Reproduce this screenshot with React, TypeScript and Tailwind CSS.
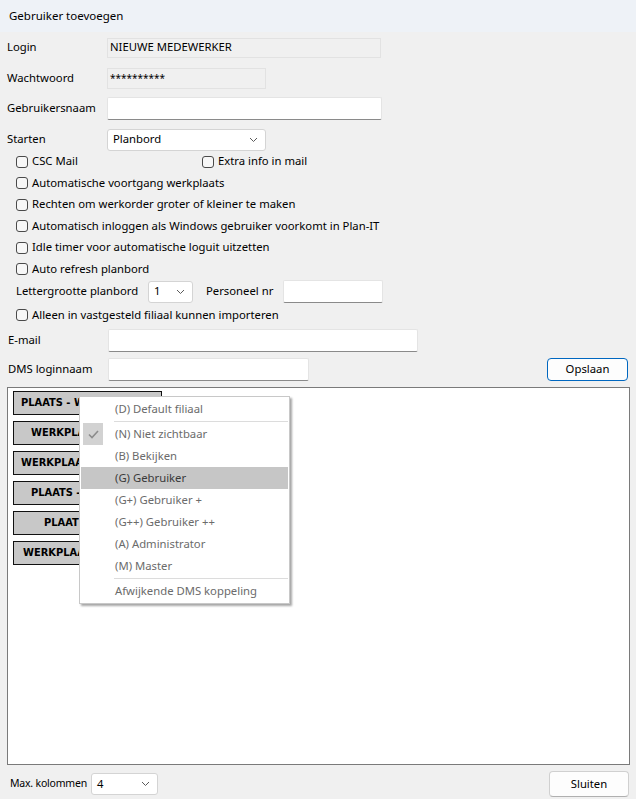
import React from "react";

const font = { fontFamily: '"Noto Sans", "Open Sans", sans-serif' };

function Check({ label }: { label: string }) {
  return (
    <label className="flex items-center gap-[4px] whitespace-nowrap">
      <span className="w-[12px] h-[12px] rounded-[3px] border border-[#4a4a4a] bg-[#f7f7f7] shrink-0" />
      <span>{label}</span>
    </label>
  );
}

function Chevron() {
  return (
    <svg width="9" height="6" viewBox="0 0 9 6" className="text-[#5a5a5a]">
      <path d="M1 1 L4.5 4.5 L8 1" fill="none" stroke="currentColor" strokeWidth="1" />
    </svg>
  );
}

function Select({ value, width }: { value: string; width: string }) {
  return (
    <div
      className={`${width} h-[22px] bg-white border border-[#d4d4d4] rounded-[3px] flex items-center justify-between pl-[5px] pr-[7px] shrink-0`}
    >
      <span>{value}</span>
      <Chevron />
    </div>
  );
}

function Field({ width, h = "h-[23px]" }: { width: string; h?: string }) {
  return (
    <div
      className={`${width} ${h} bg-white border border-[#e4e4e4] border-b-[#8a8a8a] rounded-[2px] shrink-0`}
    />
  );
}

const cards = [
  { t: "PLAATS - WERKPLAATS A", pl: "pl-[7px]" },
  { t: "WERKPLAATS NOORD", pl: "pl-[17px]" },
  { t: "WERKPLAATS OOST", pl: "pl-[7px]" },
  { t: "PLAATS - NOORD", pl: "pl-[17px]" },
  { t: "PLAATS - OOST", pl: "pl-[30px]" },
  { t: "WERKPLAATS ZUID", pl: "pl-[9px]" },
];

type Item = { t?: string; sep?: boolean; checked?: boolean; active?: boolean };

const menu: Item[] = [
  { t: "(D) Default filiaal" },
  { sep: true },
  { t: "(N) Niet zichtbaar", checked: true },
  { t: "(B) Bekijken" },
  { t: "(G) Gebruiker", active: true },
  { t: "(G+) Gebruiker +" },
  { t: "(G++) Gebruiker ++" },
  { t: "(A) Administrator" },
  { t: "(M) Master" },
  { sep: true },
  { t: "Afwijkende DMS koppeling" },
];

export default function App() {
  return (
    <div
      className="w-[636px] h-[799px] bg-[#f0f0f0] text-[11.3px] text-black flex flex-col relative overflow-hidden"
      style={font}
    >
      {/* Title bar */}
      <div className="h-[32px] bg-[#eef2f7] flex items-center pl-[9px] shrink-0 text-[11.5px]">
        Gebruiker toevoegen
      </div>

      <div className="flex flex-col pl-[7px]">
        {/* Login */}
        <div className="mt-[5px] h-[21px] flex items-center">
          <span className="w-[100px]">Login</span>
          <div className="w-[274px] h-[20px] border border-[#e2e2e2] flex items-center pl-[2px]">
            NIEUWE MEDEWERKER
          </div>
        </div>
        {/* Wachtwoord */}
        <div className="mt-[10px] h-[21px] flex items-center">
          <span className="w-[100px]">Wachtwoord</span>
          <div className="w-[159px] h-[21px] border border-[#e2e2e2] flex items-center pl-[2px] text-[10px]">
            **********
          </div>
        </div>
        {/* Gebruikersnaam */}
        <div className="mt-[8px] h-[23px] flex items-center">
          <span className="w-[100px]">Gebruikersnaam</span>
          <Field width="w-[275px]" />
        </div>
        {/* Starten */}
        <div className="mt-[8px] h-[23px] flex items-center">
          <span className="w-[100px]">Starten</span>
          <Select value="Planbord" width="w-[159px]" />
        </div>

        <div className="pl-[9px] flex flex-col">
          <div className="h-[21.5px] flex items-center">
            <div className="w-[186px]">
              <Check label="CSC Mail" />
            </div>
            <Check label="Extra info in mail" />
          </div>
          <div className="h-[21.5px] flex items-center">
            <Check label="Automatische voortgang werkplaats" />
          </div>
          <div className="h-[21.5px] flex items-center">
            <Check label="Rechten om werkorder groter of kleiner te maken" />
          </div>
          <div className="h-[21.5px] flex items-center">
            <Check label="Automatisch inloggen als Windows gebruiker voorkomt in Plan-IT" />
          </div>
          <div className="h-[21.5px] flex items-center">
            <Check label="Idle timer voor automatische loguit uitzetten" />
          </div>
          <div className="h-[21.5px] flex items-center">
            <Check label="Auto refresh planbord" />
          </div>
          <div className="h-[23px] flex items-center">
            <span className="w-[132px] whitespace-nowrap">Lettergrootte planbord</span>
            <Select value="1" width="w-[45px]" />
            <span className="ml-[13px] w-[77px] whitespace-nowrap">Personeel nr</span>
            <Field width="w-[100px]" />
          </div>
          <div className="h-[24px] flex items-center">
            <Check label="Alleen in vastgesteld filiaal kunnen importeren" />
          </div>
        </div>

        {/* E-mail */}
        <div className="mt-[2px] h-[23px] flex items-center pl-[1px]">
          <span className="w-[100px]">E-mail</span>
          <Field width="w-[310px]" />
        </div>
        {/* DMS loginnaam + Opslaan */}
        <div className="mt-[6px] h-[23px] flex items-center pl-[1px]">
          <span className="w-[100px]">DMS loginnaam</span>
          <Field width="w-[201px]" />
          <button className="ml-[238px] w-[81px] h-[23px] bg-[#fdfdfd] border border-[#0067c0] rounded-[4px] flex items-center justify-center">
            Opslaan
          </button>
        </div>

        {/* Tile panel */}
        <div className="mt-[6px] w-[623px] h-[378px] bg-white border border-[#7a7a7a] flex flex-col gap-[6px] pt-[3px] pl-[5px]">
          {cards.map((c, i) => (
            <div
              key={i}
              className={`w-[149px] h-[24px] bg-[#c8c8c8] border-[1.5px] border-[#111] flex items-center overflow-hidden whitespace-nowrap ${c.pl} text-[11px] font-bold`}
              style={{ fontFamily: '"DejaVu Sans Condensed", "DejaVu Sans", sans-serif' }}
            >
              {c.t}
            </div>
          ))}
        </div>

        {/* Bottom bar */}
        <div className="mt-[6px] h-[26px] flex items-center pl-[3px]">
          <span className="w-[81px] whitespace-nowrap text-[10.5px] tracking-[-0.2px]">Max. kolommen</span>
          <Select value="4" width="w-[67px]" />
          <button className="ml-[391px] w-[80px] h-[26px] bg-[#fdfdfd] border border-[#d0d0d0] border-b-[#b0b0b0] rounded-[4px] flex items-center justify-center">
            Sluiten
          </button>
        </div>
      </div>

      {/* Popup menu over the tile panel */}
      <div className="absolute left-[79px] top-[396px] w-[211px] bg-white border border-[#c8c8c8] shadow-[2px_2px_2px_rgba(0,0,0,0.35)] py-[1px] text-[#6b6b6b]">
        {menu.map((m, i) =>
          m.sep ? (
            <div key={i} className="ml-[34px] mr-[1px] my-[1px] h-px bg-[#dcdcdc]" />
          ) : (
            <div
              key={i}
              className={`relative h-[22px] flex items-center pl-[34px] mx-[1px] ${
                m.active ? "bg-[#c6c6c6] text-[#3a3a3a]" : ""
              }`}
            >
              {m.checked && (
                <span className="absolute left-[2px] top-0 w-[20px] h-[22px] bg-[#d2d2d2] flex items-center justify-center">
                  <svg width="11" height="9" viewBox="0 0 11 9">
                    <path d="M1 4.5 L4 7.5 L10 1" fill="none" stroke="#8c8c8c" strokeWidth="1.6" />
                  </svg>
                </span>
              )}
              {m.t}
            </div>
          )
        )}
      </div>
    </div>
  );
}
